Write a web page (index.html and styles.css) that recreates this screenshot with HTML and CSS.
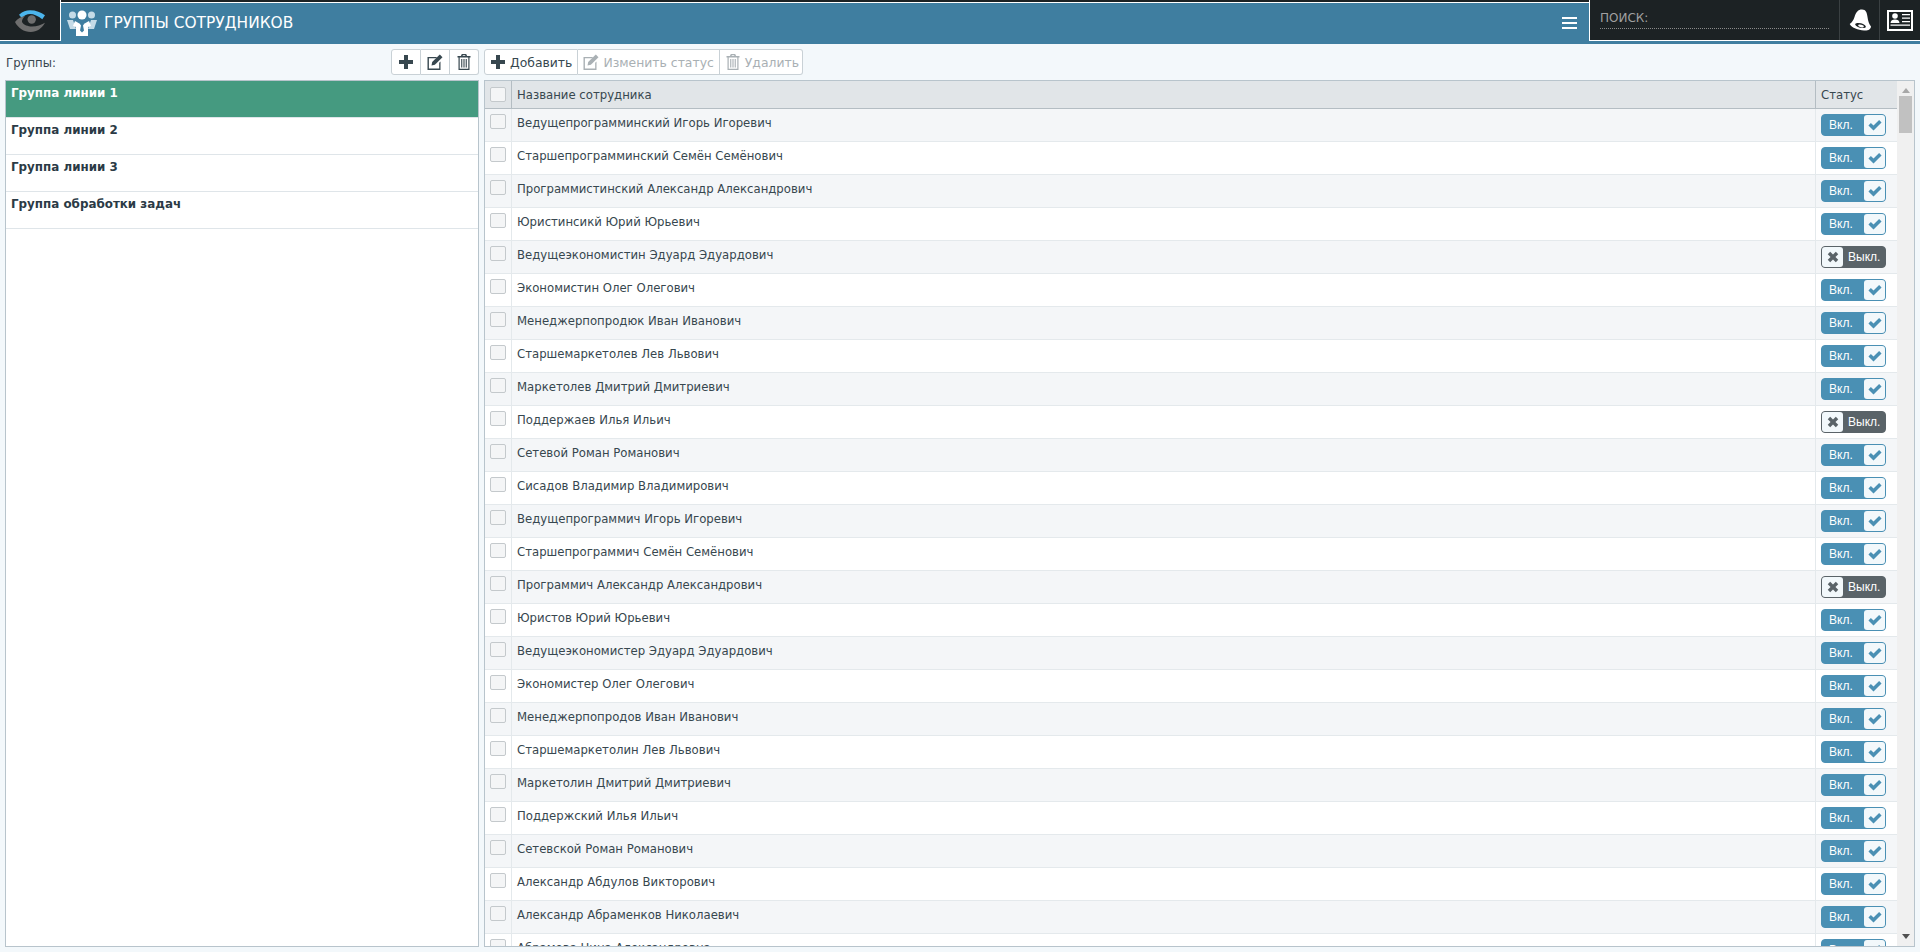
FILE: index.html
```html
<!DOCTYPE html>
<html lang="ru">
<head>
<meta charset="utf-8">
<title>Группы сотрудников</title>
<link rel="stylesheet" href="styles.css">
</head>
<body>
<svg class="defs" width="0" height="0" aria-hidden="true">
  <symbol id="plus" viewBox="0 0 16 16"><path d="M6 1h4v5h5v4h-5v5H6v-5H1V6h5z"/></symbol>
  <symbol id="edit" viewBox="0 0 16 16"><path d="M.5 3h9.700L8.900 4.300H1.900v10.300h10.300V8.800l1.300-1.300V16H.5z"/><path d="M12.800.5l2.700 2.700-7.600 7.600-3.400.7.700-3.400z"/></symbol>
  <symbol id="trash" viewBox="0 0 16 16"><path d="M5.800 0h4.400l.9 2h3.400v1.500h-1V16H2.500V3.500h-1V2h3.400zM6.600 2h2.800l-.3-.8H6.900zM3.700 3.500v11.300h8.600V3.500zM5.200 5h1.100v8.500H5.200zM7.450 5h1.100v8.500H7.450zM9.700 5h1.100v8.500H9.700z"/></symbol>
  <symbol id="check" viewBox="0 0 16 16"><path d="M.5 8.500L3.300 5.700l3 3 6.400-6.400 2.800 2.800-9.200 9.200z"/></symbol>
  <symbol id="cross" viewBox="0 0 16 16"><path d="M2 4.800L4.800 2 8 5.200 11.200 2 14 4.800 10.800 8 14 11.200 11.200 14 8 10.800 4.800 14 2 11.200 5.200 8z"/></symbol>
</svg>

<header class="topbar">
  <a class="logo">
    <svg width="34" height="26" viewBox="0 0 34 26"><path d="M5 6.700C9 3.500 12 2.300 16 2.300c6 0 11 2 15 5l-2.700 4C24 8 20 6 16 6c-3 0-5.500 1.500-8.300 4z" fill="#4cb5ec"/><path d="M1 14C3.500 10.500 7 8.500 11 8c-2 2-3.200 4-3 6 1.500 3 6 4.500 10 4.500 5 0 9-1.500 13-3.800-3 5.300-8 9.300-14.300 9.300C10 24 4 20 1 14z" fill="#6e6e6e"/><circle cx="17.700" cy="11.500" r="4.200" fill="#6e6e6e"/></svg>
  </a>
  <div class="tab">
    <svg class="tab-icon" width="30" height="26" viewBox="0 0 30 26" fill="#fff"><circle cx="5.500" cy="5" r="3.500" fill="#c5dbe7"/><circle cx="24.500" cy="5" r="3.500" fill="#c5dbe7"/><circle cx="15" cy="5" r="4.500"/><path d="M0 10h6l3 9H3z" fill="#c5dbe7"/><path d="M30 10h-6l-3 9h6z" fill="#c5dbe7"/><path d="M8 11l7 4 7-4 2 5-3 1v9H9v-9l-3-1z"/><path d="M13 14h4l-1 1.500 1 5-2 2-2-2 1-5z" fill="#3f7ea0"/></svg>
    <h1 class="tab-title">ГРУППЫ СОТРУДНИКОВ</h1>
    <div class="burger"><i></i><i></i><i></i></div>
  </div>
  <div class="tools">
    <div class="search"><span>ПОИСК:</span></div>
    <div class="tool">
      <svg width="22" height="23" viewBox="0 0 22 23" fill="#fff"><path d="M13 .5C17 .5 18 4 18.500 8 19 12 20 15 22 17.500 22 20 19 22 15 21.500 9 21 3 19 .7 15 3 13.500 4.500 11 5.500 8 7 3 9 .5 13 .5z"/><ellipse cx="11.500" cy="16.500" rx="5.500" ry="2.200" transform="rotate(15 11.500 16.500)" fill="#1c2224"/><ellipse cx="12" cy="17" rx="3" ry="1.200" transform="rotate(15 12 17)"/></svg>
    </div>
    <div class="tool">
      <svg width="26" height="21" viewBox="0 0 26 21"><rect width="26" height="21" fill="#fff"/><rect x="2" y="2" width="22" height="17" fill="#1c2224"/><circle cx="8" cy="6" r="2.800" fill="#fff"/><path d="M3.500 13c0-2.500 2-3.500 4.500-3.500s4.500 1 4.500 3.500z" fill="#fff"/><path d="M15 4h8v1.300h-8zM15 7.500h8v1.300h-8zM15 11h8v1.300h-8zM3.500 14.500H23v1.300H3.500z" fill="#fff"/></svg>
    </div>
  </div>
</header>

<main class="page">
  <section class="side">
    <div class="side-bar">
      <span class="side-label">Группы:</span>
      <div class="btns">
        <button class="btn icon-btn"><svg class="ico"><use href="#plus"/></svg></button>
        <button class="btn icon-btn"><svg class="ico"><use href="#edit"/></svg></button>
        <button class="btn icon-btn"><svg class="ico"><use href="#trash"/></svg></button>
      </div>
    </div>
    <ul class="groups">
      <li class="group active">Группа линии 1</li>
      <li class="group">Группа линии 2</li>
      <li class="group">Группа линии 3</li>
      <li class="group">Группа обработки задач</li>
    </ul>
  </section>

  <section class="content">
    <div class="btns">
      <button class="btn"><svg class="ico"><use href="#plus"/></svg>Добавить</button>
      <button class="btn off"><svg class="ico"><use href="#edit"/></svg>Изменить статус</button>
      <button class="btn off btn-end"><svg class="ico"><use href="#trash"/></svg>Удалить</button>
    </div>
    <div class="grid">
      <div class="grid-main">
        <div class="row head"><div class="c-check"><span class="cb"></span></div><div class="c-name">Название сотрудника</div><div class="c-status">Статус</div></div>
        <div class="row"><div class="c-check"><span class="cb"></span></div><div class="c-name">Ведущепрограмминский Игорь Игоревич</div><div class="c-status"><span class="sw on">Вкл.<b><svg><use href="#check"/></svg></b></span></div></div>
        <div class="row"><div class="c-check"><span class="cb"></span></div><div class="c-name">Старшепрограмминский Семён Семёнович</div><div class="c-status"><span class="sw on">Вкл.<b><svg><use href="#check"/></svg></b></span></div></div>
        <div class="row"><div class="c-check"><span class="cb"></span></div><div class="c-name">Программистинский Александр Александрович</div><div class="c-status"><span class="sw on">Вкл.<b><svg><use href="#check"/></svg></b></span></div></div>
        <div class="row"><div class="c-check"><span class="cb"></span></div><div class="c-name">Юристинсикй Юрий Юрьевич</div><div class="c-status"><span class="sw on">Вкл.<b><svg><use href="#check"/></svg></b></span></div></div>
        <div class="row"><div class="c-check"><span class="cb"></span></div><div class="c-name">Ведущеэкономистин Эдуард Эдуардович</div><div class="c-status"><span class="sw no"><b><svg><use href="#cross"/></svg></b>Выкл.</span></div></div>
        <div class="row"><div class="c-check"><span class="cb"></span></div><div class="c-name">Экономистин Олег Олегович</div><div class="c-status"><span class="sw on">Вкл.<b><svg><use href="#check"/></svg></b></span></div></div>
        <div class="row"><div class="c-check"><span class="cb"></span></div><div class="c-name">Менеджерпопродюк Иван Иванович</div><div class="c-status"><span class="sw on">Вкл.<b><svg><use href="#check"/></svg></b></span></div></div>
        <div class="row"><div class="c-check"><span class="cb"></span></div><div class="c-name">Старшемаркетолев Лев Львович</div><div class="c-status"><span class="sw on">Вкл.<b><svg><use href="#check"/></svg></b></span></div></div>
        <div class="row"><div class="c-check"><span class="cb"></span></div><div class="c-name">Маркетолев Дмитрий Дмитриевич</div><div class="c-status"><span class="sw on">Вкл.<b><svg><use href="#check"/></svg></b></span></div></div>
        <div class="row"><div class="c-check"><span class="cb"></span></div><div class="c-name">Поддержаев Илья Ильич</div><div class="c-status"><span class="sw no"><b><svg><use href="#cross"/></svg></b>Выкл.</span></div></div>
        <div class="row"><div class="c-check"><span class="cb"></span></div><div class="c-name">Сетевой Роман Романович</div><div class="c-status"><span class="sw on">Вкл.<b><svg><use href="#check"/></svg></b></span></div></div>
        <div class="row"><div class="c-check"><span class="cb"></span></div><div class="c-name">Сисадов Владимир Владимирович</div><div class="c-status"><span class="sw on">Вкл.<b><svg><use href="#check"/></svg></b></span></div></div>
        <div class="row"><div class="c-check"><span class="cb"></span></div><div class="c-name">Ведущепрограммич Игорь Игоревич</div><div class="c-status"><span class="sw on">Вкл.<b><svg><use href="#check"/></svg></b></span></div></div>
        <div class="row"><div class="c-check"><span class="cb"></span></div><div class="c-name">Старшепрограммич Семён Семёнович</div><div class="c-status"><span class="sw on">Вкл.<b><svg><use href="#check"/></svg></b></span></div></div>
        <div class="row"><div class="c-check"><span class="cb"></span></div><div class="c-name">Программич Александр Александрович</div><div class="c-status"><span class="sw no"><b><svg><use href="#cross"/></svg></b>Выкл.</span></div></div>
        <div class="row"><div class="c-check"><span class="cb"></span></div><div class="c-name">Юристов Юрий Юрьевич</div><div class="c-status"><span class="sw on">Вкл.<b><svg><use href="#check"/></svg></b></span></div></div>
        <div class="row"><div class="c-check"><span class="cb"></span></div><div class="c-name">Ведущеэкономистер Эдуард Эдуардович</div><div class="c-status"><span class="sw on">Вкл.<b><svg><use href="#check"/></svg></b></span></div></div>
        <div class="row"><div class="c-check"><span class="cb"></span></div><div class="c-name">Экономистер Олег Олегович</div><div class="c-status"><span class="sw on">Вкл.<b><svg><use href="#check"/></svg></b></span></div></div>
        <div class="row"><div class="c-check"><span class="cb"></span></div><div class="c-name">Менеджерпопродов Иван Иванович</div><div class="c-status"><span class="sw on">Вкл.<b><svg><use href="#check"/></svg></b></span></div></div>
        <div class="row"><div class="c-check"><span class="cb"></span></div><div class="c-name">Старшемаркетолин Лев Львович</div><div class="c-status"><span class="sw on">Вкл.<b><svg><use href="#check"/></svg></b></span></div></div>
        <div class="row"><div class="c-check"><span class="cb"></span></div><div class="c-name">Маркетолин Дмитрий Дмитриевич</div><div class="c-status"><span class="sw on">Вкл.<b><svg><use href="#check"/></svg></b></span></div></div>
        <div class="row"><div class="c-check"><span class="cb"></span></div><div class="c-name">Поддержский Илья Ильич</div><div class="c-status"><span class="sw on">Вкл.<b><svg><use href="#check"/></svg></b></span></div></div>
        <div class="row"><div class="c-check"><span class="cb"></span></div><div class="c-name">Сетевской Роман Романович</div><div class="c-status"><span class="sw on">Вкл.<b><svg><use href="#check"/></svg></b></span></div></div>
        <div class="row"><div class="c-check"><span class="cb"></span></div><div class="c-name">Александр Абдулов Викторович</div><div class="c-status"><span class="sw on">Вкл.<b><svg><use href="#check"/></svg></b></span></div></div>
        <div class="row"><div class="c-check"><span class="cb"></span></div><div class="c-name">Александр Абраменков Николаевич</div><div class="c-status"><span class="sw on">Вкл.<b><svg><use href="#check"/></svg></b></span></div></div>
        <div class="row"><div class="c-check"><span class="cb"></span></div><div class="c-name">Абрамова Нина Александровна</div><div class="c-status"><span class="sw on">Вкл.<b><svg><use href="#check"/></svg></b></span></div></div>
      </div>
      <div class="scroll">
        <span class="arrow up"></span>
        <div class="track"><span class="thumb"></span></div>
        <span class="arrow down"></span>
      </div>
    </div>
  </section>
</main>
</body>
</html>
```

FILE: styles.css
```css
* { box-sizing: border-box; }
html, body { height: 100%; }
body {
  margin: 0;
  height: 952px;
  overflow: hidden;
  display: flex;
  flex-direction: column;
  background: #f3f8fb;
  font-family: "DejaVu Sans", Verdana, sans-serif;
  font-size: 11.7px;
  color: #37474f;
}
.defs { position: absolute; }

.topbar {
  flex: none;
  height: 44px;
  display: flex;
  align-items: flex-start;
  background: linear-gradient(#1c2224 0 41px, #3f7ea0 41px);
}
.logo {
  width: 61px;
  height: 41px;
  display: flex;
  align-items: center;
  justify-content: center;
  padding: 2px 0 0 2px;
  background: #1c2224;
  border-right: 1px solid #fff;
  border-bottom: 1px solid #fff;
}
.tab {
  flex: 1;
  height: 42px;
  margin-top: 2px;
  display: flex;
  align-items: center;
  padding: 0 12px 1px 6px;
  background: #3f7ea0;
  border-top: 1px solid #fff;
}
.tab-icon { flex: none; }
.tab-title {
  flex: 1;
  margin: 0 0 0 7px;
  font-family: "DejaVu Sans", Verdana, sans-serif;
  font-size: 15.4px;
  font-weight: 400;
  color: #fff;
}
.burger { display: flex; flex-direction: column; gap: 3px; width: 15px; }
.burger i { display: block; height: 2px; background: #fff; }
.tools {
  width: 331px;
  height: 41px;
  display: flex;
  background: #1c2224;
  border-left: 1px solid #fff;
  border-bottom: 1px solid #fff;
}
.search { width: 249px; padding: 9px 0 0 10px; }
.search span {
  display: block;
  width: 229px;
  height: 20px;
  font-size: 12px;
  line-height: 18px;
  color: #a0a0a0;
  border-bottom: 1px dotted #8a8a8a;
}
.tool {
  width: 40px;
  display: flex;
  align-items: center;
  justify-content: center;
  border-left: 1px solid #3a4042;
}

.page {
  flex: 1;
  min-height: 0;
  display: flex;
  gap: 5px;
  padding: 5px 5px 5px;
}
.side { width: 474px; display: flex; flex-direction: column; }
.side-bar { height: 31px; display: flex; justify-content: space-between; align-items: flex-start; }
.side-label { padding: 7px 0 0 1px; }
.groups {
  flex: 1;
  margin: 0;
  padding: 0;
  list-style: none;
  background: #fff;
  border: 1px solid #b8c4cc;
}
.group {
  height: 37px;
  padding: 5px 5px 0;
  font-size: 11.9px;
  font-weight: 700;
  color: #2b3a45;
  border-bottom: 1px solid #dfe5e9;
}
.group.active { color: #fff; background: #459a80; }

.btns { display: flex; height: 26px; }
.btn {
  display: flex;
  align-items: center;
  gap: 4px;
  height: 26px;
  padding: 0 5px;
  font-family: inherit;
  font-size: 12.4px;
  color: #37474f;
  background: #fff;
  border: 1px solid #c9d1d6;
  border-left-width: 0;
}
.btn:first-child { border-left-width: 1px; border-radius: 3px 0 0 3px; }
.btn:last-child { border-radius: 0 3px 3px 0; }
.btn.off { color: #a9b0b4; }
.btn-end { padding-right: 3px; }
.icon-btn { width: 29px; justify-content: center; padding: 0; }
.icon-btn:first-child { width: 30px; }
.ico { width: 16px; height: 16px; fill: currentColor; flex: none; }

.content { flex: 1; min-width: 0; display: flex; flex-direction: column; gap: 5px; }
.grid {
  flex: 1;
  min-height: 0;
  display: flex;
  overflow: hidden;
  background: #f0f0f0;
  border: 1px solid #b8c4cc;
}
.grid-main { flex: 1; min-width: 0; }
.row {
  height: 33px;
  display: flex;
  background: #fff;
  border-bottom: 1px solid #e4e9ec;
}
.row:nth-child(even) { background: #f4f6f8; }
.row.head {
  height: 28px;
  background: #e1e5e8;
  border-bottom: 1px solid #b4bdc3;
}
.c-check { width: 27px; flex: none; padding: 5px 0 0 5px; border-right: 1px solid #e4e9ec; }
.head .c-check { padding-top: 6px; border-right-color: #b4bdc3; }
.c-name { flex: 1; padding: 7px 0 0 5px; }
.head .c-name { padding-top: 7px; }
.c-status { width: 82px; flex: none; padding: 5px 0 0 5px; border-left: 1px solid #e4e9ec; }
.head .c-status { padding-top: 7px; border-left-color: #b4bdc3; }
.cb {
  display: block;
  width: 16px;
  height: 15px;
  background: #f4f5f6;
  border: 1px solid #c4c9cc;
  border-radius: 2px;
}
.sw {
  display: flex;
  align-items: center;
  width: 65px;
  height: 22px;
  font-family: "Liberation Sans", Arial, sans-serif;
  font-size: 12px;
  border-radius: 4px;
  color: #fff;
  border: 1px solid;
}
.sw b {
  width: 21px;
  height: 20px;
  display: flex;
  align-items: center;
  justify-content: center;
  border-radius: 3px;
  background: #f2f8fb;
}
.sw svg { width: 14px; height: 14px; }
.sw.on { background: #4a90b4; border-color: #4a90b4; justify-content: space-between; padding-left: 7px; }
.sw.on svg { fill: #4a90b4; }
.sw.no { background: #5a6368; border-color: #5a6368; gap: 5px; }
.sw.no svg { fill: #5a6368; }

.scroll {
  flex: none;
  width: 17px;
  display: flex;
  flex-direction: column;
  align-items: center;
  background: #f0f0f0;
  padding: 7px 0;
}
.track { flex: 1; width: 100%; padding: 3px 2px; }
.thumb { display: block; height: 37px; background: #c1c1c1; }
.arrow { width: 0; height: 0; border-left: 4px solid transparent; border-right: 4px solid transparent; }
.arrow.up { border-bottom: 5px solid #a8a8a8; }
.arrow.down { border-top: 5px solid #505050; }
```
